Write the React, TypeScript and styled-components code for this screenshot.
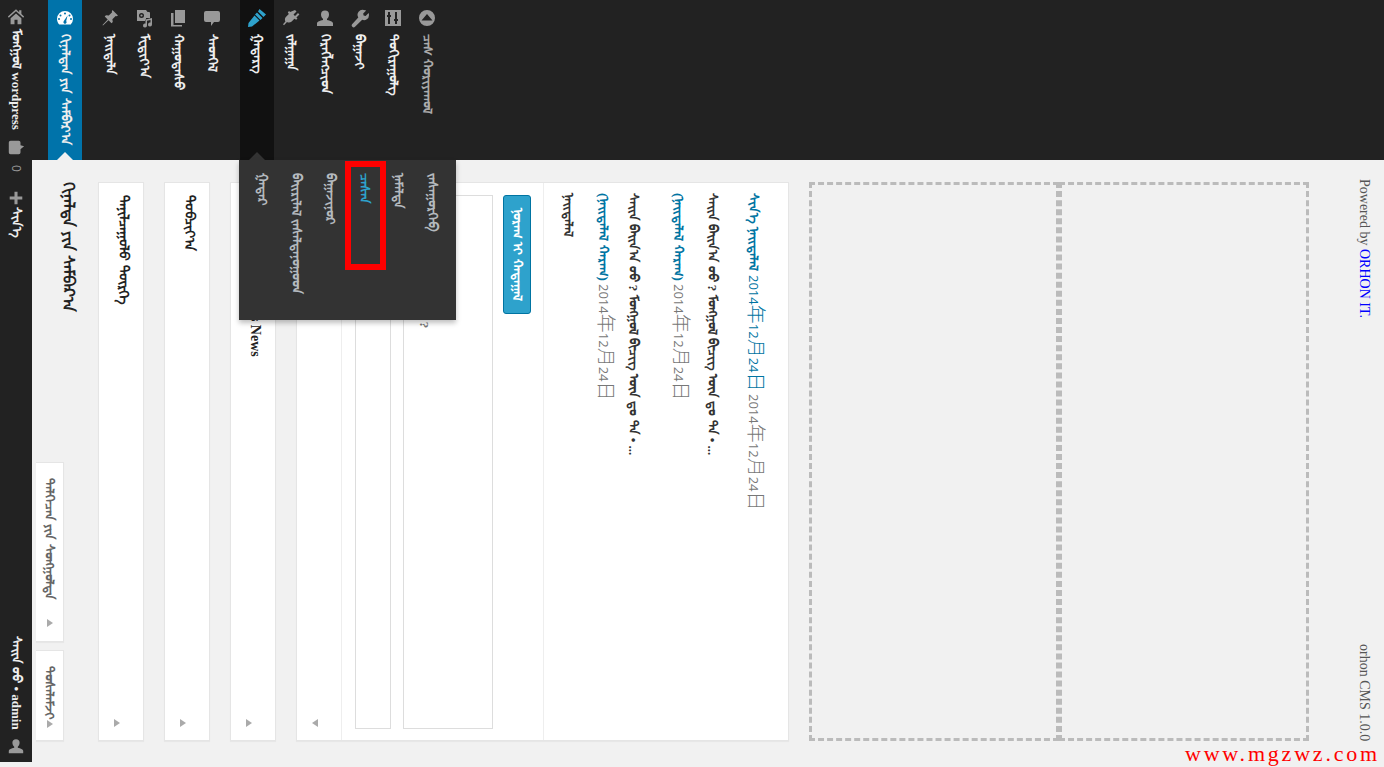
import * as React from "react";
import styled, { createGlobalStyle } from "styled-components";

const GlobalStyle = createGlobalStyle`
    html, body {
        margin: 0;
        padding: 0;
        height: 100%;
        background: #f1f1f1;
        overflow: hidden;
    }
    #root {
        height: 100%;
    }
`;

const Page = styled.div`
    position: relative;
    display: flex;
    width: 1384px;
    height: 762px;
    font-family: "Liberation Serif", "Noto Sans", "DejaVu Sans", serif;
    font-size: 13px;
    font-weight: 700;
    color: #444;
`;

const VText = styled.span<{ $color?: string }>`
    writing-mode: vertical-lr;
    text-orientation: sideways;
    white-space: nowrap;
    line-height: 1.2;
    color: ${(p) => p.$color || "inherit"};
`;

/* admin bar */
const AdminBar = styled.div`
    flex: 0 0 32px;
    background: #222;
    color: #eee;
    display: flex;
    flex-direction: column;
    align-items: center;
    padding: 8px 0 7px;
    box-sizing: border-box;
`;

const BarGroup = styled.div<{ $top?: number }>`
    display: flex;
    flex-direction: column;
    align-items: center;
    margin-top: ${(p) => p.$top || 0}px;
`;

const BarIcon = styled.span`
    display: flex;
    color: #999;
`;

const BarSpacer = styled.div`
    flex: 1;
`;

const BarCount = styled(VText)`
    color: #999;
    font-size: 12px;
    font-weight: 400;
    font-family: "Open Sans", sans-serif;
    margin-top: 8px;
`;

/* main */
const Main = styled.div`
    flex: 1;
    display: flex;
    flex-direction: column;
    min-width: 0;
`;

const MenuBar = styled.nav`
    flex: 0 0 160px;
    background: #222;
    display: flex;
    padding-left: 16px;
`;

const MenuItem = styled.div<{ $state?: "current" | "open"; $after?: boolean }>`
    position: relative;
    flex: 0 0 34px;
    display: flex;
    flex-direction: column;
    align-items: center;
    padding-top: 8px;
    box-sizing: border-box;
    margin-right: ${(p) => (p.$after ? 11 : 0)}px;
    background: ${(p) =>
        p.$state === "current" ? "#0073aa" : p.$state === "open" ? "#111" : "transparent"};
    color: ${(p) => (p.$state === "current" ? "#fff" : p.$state === "open" ? "#2ea2cc" : "#999")};
`;

const MenuLabel = styled(VText)<{ $dim?: boolean }>`
    margin-top: 6px;
    color: ${(p) => (p.$dim ? "#aaa" : "#eee")};
`;

const MenuArrow = styled.i<{ $color: string }>`
    position: absolute;
    left: 50%;
    bottom: 0;
    margin-left: -8px;
    border-left: 8px solid transparent;
    border-right: 8px solid transparent;
    border-bottom: 8px solid ${(p) => p.$color};
`;

const Flyout = styled.div`
    position: absolute;
    top: 160px;
    left: -1px;
    width: 217px;
    height: 160px;
    background: #333;
    box-shadow: 0 3px 5px rgba(0, 0, 0, 0.25);
    display: flex;
    padding: 13px 0 0 6px;
    box-sizing: border-box;
    z-index: 5;
`;

const FlyoutItem = styled(VText)<{ $active?: boolean }>`
    flex: 0 0 34px;
    display: flex;
    align-items: center;
    color: ${(p) => (p.$active ? "#2ea2cc" : "#b4b9be")};
`;

/* content */
const Content = styled.div`
    flex: 1;
    display: flex;
    padding: 22px 0 21px;
    min-height: 0;
`;

const HeadColumn = styled.div`
    flex: 0 0 66px;
    display: flex;
    flex-direction: column;
`;

const Heading = styled(VText)`
    margin-left: 27px;
    font-size: 16px;
    color: #222;
`;

const ScreenTabs = styled.div`
    margin-top: auto;
    margin-left: 4px;
    display: flex;
    flex-direction: column;
    gap: 8px;
`;

const ScreenTab = styled.div<{ $height: number }>`
    width: 28px;
    height: ${(p) => p.$height}px;
    background: #fff;
    border: 1px solid #e5e5e5;
    border-left: 0;
    box-shadow: 0 1px 1px rgba(0, 0, 0, 0.04);
    box-sizing: border-box;
    display: flex;
    flex-direction: column;
    align-items: center;
    padding: 15px 0 14px;
    color: #666;
`;

const Arrow = styled.i<{ $left?: boolean }>`
    margin-top: auto;
    align-self: flex-start;
    border-top: 4px solid transparent;
    border-bottom: 4px solid transparent;
    ${(p) =>
        p.$left ? "border-right: 6px solid #aaa;" : "border-left: 6px solid #aaa;"}
`;

const TabArrow = styled(Arrow)`
    align-self: center;
`;

const Boxes = styled.div`
    display: flex;
    gap: 20px;
`;

const PostBox = styled.section<{ $width: number }>`
    flex: 0 0 ${(p) => p.$width}px;
    background: #fff;
    border: 1px solid #e5e5e5;
    box-shadow: 0 1px 1px rgba(0, 0, 0, 0.04);
    box-sizing: border-box;
    display: flex;
`;

const BoxTitle = styled.div`
    flex: 0 0 44px;
    display: flex;
    flex-direction: column;
    padding: 12px 0 13px 15px;
    box-sizing: border-box;
    color: #222;
`;

const TitleText = styled(VText)`
    font-size: 14px;
`;

const Draft = styled.div`
    flex: 0 0 203px;
    display: flex;
    gap: 12px;
    padding: 12px 0 11px 13px;
    box-sizing: border-box;
    border-left: 1px solid #eee;
    border-right: 1px solid #eee;
`;

const Field = styled.div<{ $width: number }>`
    flex: 0 0 ${(p) => p.$width}px;
    box-sizing: border-box;
    background: #fff;
    border: 1px solid #ddd;
    padding: 12px 0 0 12px;
    color: #777;
`;

const PublishButton = styled.button`
    flex: 0 0 28px;
    height: 119px;
    padding: 0;
    margin-left: -2px;
    border: 1px solid #0074a2;
    border-radius: 3px;
    background: #2ea2cc;
    color: #fff;
    font: inherit;
    display: flex;
    align-items: center;
    justify-content: center;
`;

const Activity = styled.div`
    flex: 1;
    display: flex;
    padding: 10px 0 0 14px;
    gap: 10px;
    color: #333;
`;

const ActivityLine = styled(VText)<{ $gap?: number }>`
    margin-left: ${(p) => p.$gap || 0}px;
    line-height: 20px;
`;

const PostLink = styled.span`
    color: #0074a2;
`;

const DateText = styled.span<{ $link?: boolean }>`
    color: ${(p) => (p.$link ? "#0074a2" : "#777")};
    font-family: "Open Sans", "Noto Sans CJK SC", sans-serif;
    font-size: 13px;
    font-weight: 400;
`;

const Cjk = styled.span`
    font-family: "Noto Sans CJK SC", sans-serif;
    font-size: 19px;
    font-weight: 300;
`;

const DropZones = styled.div`
    margin-left: 20px;
    display: flex;
`;

const DropZone = styled.div`
    width: 250px;
    border: 3px dashed #bbb;
    box-sizing: border-box;
`;

const Footer = styled.footer`
    margin-left: 46px;
    margin-top: -3px;
    display: flex;
    flex-direction: column;
    justify-content: space-between;
    font-size: 14px;
    font-weight: 400;
    color: #555;
`;

const FooterLink = styled.a`
    color: #00f;
    text-decoration: none;
`;

/* annotation drawn over the screenshot */
const RedMark = styled.div`
    position: absolute;
    left: 345px;
    top: 161px;
    width: 41px;
    height: 109px;
    border: 6px solid #f00;
    box-sizing: border-box;
    z-index: 6;
`;

const Watermark = styled.div`
    position: absolute;
    right: 4px;
    top: 741px;
    font-size: 22px;
    font-weight: 400;
    letter-spacing: 2.8px;
    color: #f00;
    white-space: nowrap;
    z-index: 6;
`;

const Icon: React.FC<{ d: string; size?: number }> = ({ d, size = 20 }) => (
    <svg width={size} height={size} viewBox="0 0 20 20" fill="currentColor">
        <path fillRule="evenodd" d={d} />
    </svg>
);

const icons = {
    home: "M10 1.500 1 9.500l1 1.200L10 3.700l8 7 1-1.200-3-2.700V2.500h-2.500V4.600zM4 11.500 10 6l6 5.500V18h-4.300v-5H8.300v5H4z",
    gauge: "M10 3a8 8 0 0 0-8 8c0 2.200.9 4.200 2.300 5.600h11.400A8 8 0 0 0 18 11a8 8 0 0 0-8-8zM10 4.500a1 1 0 1 1 0 2 1 1 0 0 1 0-2zM5.500 6.400a1 1 0 1 1 0 2 1 1 0 0 1 0-2zM14.500 6.400a1 1 0 1 1 0 2 1 1 0 0 1 0-2zM4 10a1 1 0 1 1 0 2 1 1 0 0 1 0-2zM16 10a1 1 0 1 1 0 2 1 1 0 0 1 0-2zM12.600 7.500l-1.400 5.600a1.600 1.600 0 1 1-2.400 0z",
    pin: "M12.500 2 18 7.500l-1.400.7-.9-.3-3.300 3.300.4 2.800-1.300 1.300-3-3L3 17.500l-.5-.5 5.200-5.500-3-3L6 7.200l2.800.4 3.300-3.300-.3-.9z",
    media: "M3 2h9l1.500 2H15a1 1 0 0 1 1 1v5h-4v3H3zM7.500 5a2.500 2.500 0 1 0 0 5 2.500 2.500 0 0 0 0-5zM7.500 6.400a1.100 1.100 0 1 1 0 2.200 1.100 1.100 0 0 1 0-2.200zM18 10v6.500a2 2 0 1 1-1.500-1.900V12l-3.500.8v4.700a2 2 0 1 1-1.500-1.900V11.500z",
    pages: "M7 2h10v13H7zM3 5h2.500v12H14v1.500H3z",
    comment: "M4 3h12a2 2 0 0 1 2 2v7a2 2 0 0 1-2 2h-4l-3 4v-4H4a2 2 0 0 1-2-2V5a2 2 0 0 1 2-2z",
    brush: "M12.500 1 19 6.500 16.500 9 11 3.500zM10 4.500 15.500 10 13.500 12 8 6.500zM7.500 7.500 12.500 12.500 5 18.500 1 19 1.500 15z",
    plug: "M14 2l1.500 1.400-3 3L14 8l3-3 1.400 1.400-3 3 1.100 1-1.300 1.300-1.800-1-2.700 2.700c-1.500 1.400-3.300 1.400-4.700.6L3 17.300l-1-1 2.400-2.900c-.8-1.400-.7-3.200.7-4.600l2.700-2.700-1-1.800 1.300-1.300 1 1.100z",
    user: "M10 2.500a4 4 0 0 1 4 4c0 1.900-1.100 3.700-2 4.300v1.100c3 .7 6 1.800 6 3.400V18H2v-2.700c0-1.600 3-2.700 6-3.400v-1.100c-.9-.6-2-2.400-2-4.300a4 4 0 0 1 4-4z",
    wrench: "M15 2c.8 0 1.500.2 2.200.6l-3 3 .4 2 2 .4 3-3c.4.700.4 1.400.4 2.200a5 5 0 0 1-6.800 4.600L6 18.700a1.900 1.900 0 0 1-2.700-2.700l6-6.600A5 5 0 0 1 15 2z",
    sliders: "M2 2h16v16H2zM5 4v3H4v2h1v7h2V9h1V7H7V4zM12 4v7h-1v2h1v3h2v-3h1v-2h-1V4z",
    collapse: "M10 2a8 8 0 1 0 0 16 8 8 0 0 0 0-16zM10 6l5.500 6.500h-11z",
    bubble: "M4 2h9a2 2 0 0 1 2 2v3l4 1-4 3.500V15a2 2 0 0 1-2 2H4a2 2 0 0 1-2-2V4a2 2 0 0 1 2-2z",
    plus: "M8.300 3h3.400v5.300H17v3.400h-5.300V17H8.300v-5.300H3V8.300h5.300z",
};

const menuGroups = [
    { icon: icons.pin, label: "ᠨᠡᠢᠲᠡᠯᠡ", key: "posts" },
    { icon: icons.media, label: "ᠮᠧᠳᠢᠶ᠎ᠠ", key: "media" },
    { icon: icons.pages, label: "ᠬᠠᠭᠤᠳᠠᠰᠤ", key: "pages" },
    { icon: icons.comment, label: "ᠰᠡᠳᠬᠡᠯ", key: "comments" },
];

const lowerMenu = [
    { icon: icons.plug, label: "ᠵᠠᠯᠭᠠᠭᠠ" },
    { icon: icons.user, label: "ᠬᠡᠷᠡᠭᠯᠡᠭᠴᠢᠳ" },
    { icon: icons.wrench, label: "ᠪᠠᠭᠠᠵᠢ" },
    { icon: icons.sliders, label: "ᠲᠣᠬᠢᠷᠠᠭᠤᠯᠭ" },
];

const flyoutItems = [
    "ᠭᠠᠳᠠᠷ",
    "ᠪᠠᠢᠷᠢᠯᠠᠯ ᠵᠠᠰᠠᠯᠲᠠᠨᠤᠭᠤᠳ",
    "ᠪᠠᠭᠠᠵᠢᠨᠤᠷ",
    "ᠴᠡᠰᠡᠨ",
    "ᠨᠡᠮᠡᠯᠲᠡ",
    "ᠵᠠᠰᠠᠭᠤᠷᠬᠡᠪ",
];

const PostDate: React.FC<{ link?: boolean }> = ({ link }) => (
    <DateText $link={link}>
        2014<Cjk>年</Cjk>12<Cjk>月</Cjk>24<Cjk>日</Cjk>
    </DateText>
);

const excerpt = "ᠰᠠᠢᠨ ᠪᠠᠢᠨ᠎ᠠ ᠤᠤ ? ᠮᠣᠩᠭᠣᠯ ᠪᠢᠴᠢᠭ ᠦᠨ ᠳᠤ ᠲᠠ  • ...";

const App: React.FC = () => {
    return (
        <Page>
            <GlobalStyle />
            <AdminBar>
                <BarIcon>
                    <Icon d={icons.home} size={18} />
                </BarIcon>
                <BarGroup $top={3}>
                    <VText>ᠮᠣᠩᠭᠣᠯ wordpress</VText>
                </BarGroup>
                <BarGroup $top={9}>
                    <BarIcon>
                        <Icon d={icons.bubble} size={18} />
                    </BarIcon>
                    <BarCount>0</BarCount>
                </BarGroup>
                <BarGroup $top={17}>
                    <BarIcon>
                        <Icon d={icons.plus} size={18} />
                    </BarIcon>
                    <VText>ᠰᠢᠨ᠎ᠡ</VText>
                </BarGroup>
                <BarSpacer />
                <VText>ᠰᠠᠢᠨ ᠤᠤ • admin</VText>
                <BarGroup $top={7}>
                    <BarIcon>
                        <Icon d={icons.user} size={18} />
                    </BarIcon>
                </BarGroup>
            </AdminBar>

            <Main>
                <MenuBar>
                    <MenuItem $state="current" $after>
                        <Icon d={icons.gauge} />
                        <MenuLabel>ᠬᠢᠨᠠᠯᠲᠠᠨ ᠶᠢᠨ ᠰᠠᠮᠪᠠᠷ᠎ᠠ</MenuLabel>
                        <MenuArrow $color="#f1f1f1" />
                    </MenuItem>
                    {menuGroups.map((m, i) => (
                        <MenuItem key={m.key} $after={i === menuGroups.length - 1}>
                            <Icon d={m.icon} />
                            <MenuLabel>{m.label}</MenuLabel>
                        </MenuItem>
                    ))}
                    <MenuItem $state="open">
                        <Icon d={icons.brush} />
                        <MenuLabel>ᠭᠠᠳᠠᠷᠭ</MenuLabel>
                        <MenuArrow $color="#333" />
                        <Flyout>
                            {flyoutItems.map((f, i) => (
                                <FlyoutItem key={f} $active={i === 3}>
                                    {f}
                                </FlyoutItem>
                            ))}
                        </Flyout>
                    </MenuItem>
                    {lowerMenu.map((m) => (
                        <MenuItem key={m.label}>
                            <Icon d={m.icon} />
                            <MenuLabel>{m.label}</MenuLabel>
                        </MenuItem>
                    ))}
                    <MenuItem>
                        <Icon d={icons.collapse} />
                        <MenuLabel $dim>ᠴᠡᠰ ᠬᠤᠷᠢᠶᠠᠬᠤᠯ</MenuLabel>
                    </MenuItem>
                </MenuBar>

                <Content>
                    <HeadColumn>
                        <Heading>ᠬᠢᠨᠠᠯᠲᠠ ᠶᠢᠨ ᠰᠠᠮᠪᠠᠷ᠎ᠠ</Heading>
                        <ScreenTabs>
                            <ScreenTab $height={180}>
                                <VText>ᠳᠡᠯᠭᠡᠴᠡᠨ ᠶᠢᠨ ᠰᠣᠩᠭᠣᠯᠲᠠ</VText>
                                <TabArrow />
                            </ScreenTab>
                            <ScreenTab $height={91}>
                                <VText>ᠲᠤᠰᠠᠯᠠᠮᠵᠢ</VText>
                                <TabArrow />
                            </ScreenTab>
                        </ScreenTabs>
                    </HeadColumn>

                    <Boxes>
                        <PostBox $width={46}>
                            <BoxTitle>
                                <TitleText>ᠲᠠᠨᠢᠯᠴᠠᠭᠤᠯᠤ ᠲᠦᠷᠭᠡ</TitleText>
                                <Arrow />
                            </BoxTitle>
                        </PostBox>
                        <PostBox $width={46}>
                            <BoxTitle>
                                <TitleText>ᠲᠣᠪᠴᠢᠶ᠎ᠠ</TitleText>
                                <Arrow />
                            </BoxTitle>
                        </PostBox>
                        <PostBox $width={46}>
                            <BoxTitle>
                                <TitleText>ᠮᠣᠩᠭᠣᠯᠤᠨ WordPress News</TitleText>
                                <Arrow />
                            </BoxTitle>
                        </PostBox>
                        <PostBox $width={493}>
                            <BoxTitle>
                                <TitleText>ᠳᠦᠷᠭᠡᠨ ᠨᠣᠢᠷᠠᠭ</TitleText>
                                <Arrow $left />
                            </BoxTitle>
                            <Draft>
                                <Field $width={36} />
                                <Field $width={90}>
                                    <VText>ᠶᠠᠭᠤ ᠪᠣᠳᠤᠵᠤ ᠪᠠᠢᠨ᠎ᠠ ?</VText>
                                </Field>
                                <PublishButton>
                                    <VText>ᠨᠣᠷᠠᠭ ᠢ ᠬᠠᠳᠠᠭᠠᠯ</VText>
                                </PublishButton>
                            </Draft>
                            <Activity>
                                <ActivityLine>ᠨᠡᠢᠲᠡᠯᠡᠯ</ActivityLine>
                                <ActivityLine $gap={5}>
                                    <PostLink>(ᠨᠡᠢᠲᠡᠯᠡᠯ ᠬᠠᠷᠠᠬ)</PostLink> <PostDate />
                                </ActivityLine>
                                <ActivityLine $gap={-4}>{excerpt}</ActivityLine>
                                <ActivityLine $gap={15}>
                                    <PostLink>(ᠨᠡᠢᠲᠡᠯᠡᠯ ᠬᠠᠷᠠᠬ)</PostLink> <PostDate />
                                </ActivityLine>
                                <ActivityLine>{excerpt}</ActivityLine>
                                <ActivityLine $gap={11}>
                                    <PostLink>ᠰᠢᠨ᠎ᠡ ᠨᠡᠢᠲᠡᠯᠡᠯ</PostLink> <PostDate link />{" "}
                                    <PostDate />
                                </ActivityLine>
                            </Activity>
                        </PostBox>
                    </Boxes>

                    <DropZones>
                        <DropZone />
                        <DropZone />
                    </DropZones>

                    <Footer>
                        <VText>
                            Powered by <FooterLink href="#">ORHON IT.</FooterLink>
                        </VText>
                        <VText>orhon CMS 1.0.0</VText>
                    </Footer>
                </Content>
            </Main>

            <RedMark />
            <Watermark>www.mgzwz.com</Watermark>
        </Page>
    );
};

export default App;
